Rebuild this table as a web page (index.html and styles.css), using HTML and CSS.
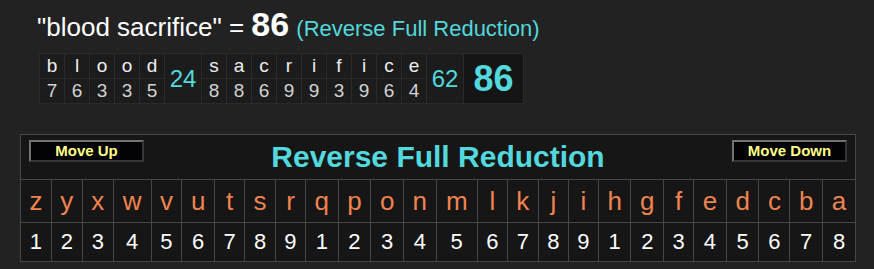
FILE: index.html
```html
<!DOCTYPE html>
<html>
<head>
<meta charset="utf-8">
<link rel="stylesheet" href="styles.css">
</head>
<body>
<div class="page">
  <div class="result"><span class="phrase">"blood sacrifice" =</span> <span class="total">86</span> <span class="cipher-name">(Reverse Full Reduction)</span></div>
  <table class="breakdown">
    <tr>
      <td class="ch">b</td><td class="ch">l</td><td class="ch">o</td><td class="ch">o</td><td class="ch">d</td>
      <td class="wsum" rowspan="2">24</td>
      <td class="ch">s</td><td class="ch">a</td><td class="ch">c</td><td class="ch">r</td><td class="ch">i</td><td class="ch">f</td><td class="ch">i</td><td class="ch">c</td><td class="ch">e</td>
      <td class="wsum" rowspan="2">62</td>
      <td class="grand" rowspan="2">86</td>
    </tr>
    <tr>
      <td class="num">7</td><td class="num">6</td><td class="num">3</td><td class="num">3</td><td class="num">5</td>
      <td class="num">8</td><td class="num">8</td><td class="num">6</td><td class="num">9</td><td class="num">9</td><td class="num">3</td><td class="num">9</td><td class="num">6</td><td class="num">4</td>
    </tr>
  </table>
  <table class="cipher">
    <tr>
      <td class="head" colspan="26">
        <div class="head-bar">
          <button class="move">Move Up</button>
          <span class="cipher-title">Reverse Full Reduction</span>
          <button class="move">Move Down</button>
        </div>
      </td>
    </tr>
    <tr class="letters">
      <td>z</td><td>y</td><td>x</td><td>w</td><td>v</td><td>u</td><td>t</td><td>s</td><td>r</td><td>q</td><td>p</td><td>o</td><td>n</td><td>m</td><td>l</td><td>k</td><td>j</td><td>i</td><td>h</td><td>g</td><td>f</td><td>e</td><td>d</td><td>c</td><td>b</td><td>a</td>
    </tr>
    <tr class="values">
      <td>1</td><td>2</td><td>3</td><td>4</td><td>5</td><td>6</td><td>7</td><td>8</td><td>9</td><td>1</td><td>2</td><td>3</td><td>4</td><td>5</td><td>6</td><td>7</td><td>8</td><td>9</td><td>1</td><td>2</td><td>3</td><td>4</td><td>5</td><td>6</td><td>7</td><td>8</td>
    </tr>
  </table>
</div>
</body>
</html>
```

FILE: styles.css
```css
html, body {
  margin: 0;
  padding: 0;
  background: #222222;
}

.page {
  font-family: "Liberation Sans", Arial, sans-serif;
  padding: 0 0 0 20px;
}

.result {
  height: 40px;
  line-height: 40px;
  padding: 4px 0 0 17px;
  font-size: 26px;
  color: #ffffff;
  white-space: nowrap;
}

.phrase {
  font-size: 26px;
}

.total {
  font-size: 34px;
  font-weight: bold;
}

.cipher-name {
  font-size: 22px;
  color: #52d8dd;
}

.breakdown {
  margin: 9px 0 0 19px;
  border-collapse: separate;
  border-spacing: 0;
  border-top: 1px solid #2a2a2a;
  border-left: 1px solid #2a2a2a;
  background: #1c1c1c;
}

.breakdown td {
  padding: 0;
  border-right: 1px solid #2a2a2a;
  border-bottom: 1px solid #2a2a2a;
  text-align: center;
  vertical-align: middle;
}

.breakdown .ch,
.breakdown .num {
  width: 24px;
  height: 24px;
  font-size: 19px;
  line-height: 24px;
}

.breakdown .ch {
  color: #eeeeee;
}

.breakdown .num {
  color: #d2d2d2;
}

.breakdown .wsum {
  width: 36px;
  font-size: 24px;
  color: #52d8dd;
}

.breakdown .grand {
  width: 59px;
  font-size: 36px;
  font-weight: bold;
  color: #52d8dd;
  background: #151515;
}

.cipher {
  margin: 30px 0 0 0;
  width: 836px;
  border-collapse: collapse;
  background: #161616;
}

.cipher td {
  border: 1px solid #474747;
  padding: 0;
  text-align: center;
}

.cipher .head {
  height: 44px;
  vertical-align: top;
}

.head-bar {
  display: flex;
  justify-content: space-between;
  align-items: flex-start;
  padding: 5px 8px 0 8px;
}

.move {
  width: 115px;
  height: 22px;
  padding: 0;
  background: #020207;
  border-style: solid;
  border-width: 2px;
  border-color: #727272 #363636 #363636 #727272;
  color: #ffff88;
  font-family: "Liberation Sans", Arial, sans-serif;
  font-size: 15px;
  font-weight: bold;
  line-height: 18px;
}

.cipher-title {
  font-size: 30px;
  font-weight: bold;
  color: #52d8dd;
  line-height: 33px;
}

.letters td {
  height: 42px;
  font-size: 26px;
  color: #f0834f;
  padding: 0 6px;
}

.values td {
  height: 38px;
  font-size: 22px;
  color: #ffffff;
  padding: 0 6px;
}
```
